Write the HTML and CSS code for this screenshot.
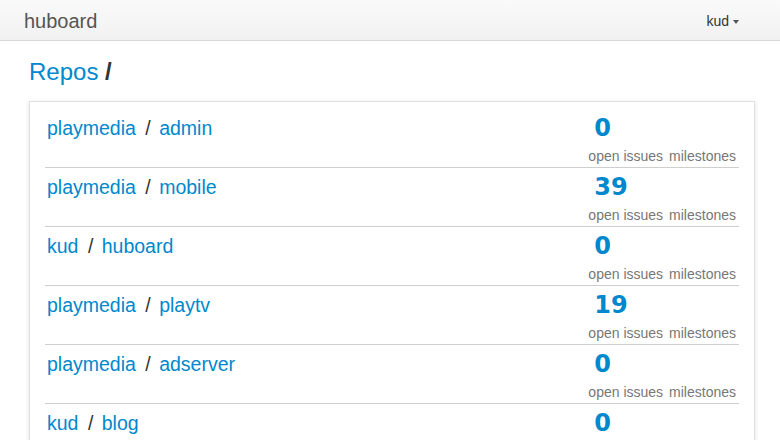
FILE: index.html
```html
<!DOCTYPE html>
<html>
<head>
<meta charset="utf-8">
<title>huboard</title>
<link rel="stylesheet" href="styles.css">
</head>
<body>
<header class="navbar">
  <a class="brand" href="#">huboard</a>
  <div class="user">kud<span class="caret"></span></div>
</header>
<main class="container">
  <h1 class="title"><a href="#">Repos</a> <span class="sep">/</span></h1>
  <div class="card">
    <div class="row">
      <div class="repo"><a href="#">playmedia</a> <span class="slash">/</span> <a href="#">admin</a></div>
      <div class="stats"><div class="num">0</div><div class="labels"><span>open issues</span><span>milestones</span></div></div>
    </div>
    <div class="row">
      <div class="repo"><a href="#">playmedia</a> <span class="slash">/</span> <a href="#">mobile</a></div>
      <div class="stats"><div class="num">39</div><div class="labels"><span>open issues</span><span>milestones</span></div></div>
    </div>
    <div class="row">
      <div class="repo"><a href="#">kud</a> <span class="slash">/</span> <a href="#">huboard</a></div>
      <div class="stats"><div class="num">0</div><div class="labels"><span>open issues</span><span>milestones</span></div></div>
    </div>
    <div class="row">
      <div class="repo"><a href="#">playmedia</a> <span class="slash">/</span> <a href="#">playtv</a></div>
      <div class="stats"><div class="num">19</div><div class="labels"><span>open issues</span><span>milestones</span></div></div>
    </div>
    <div class="row">
      <div class="repo"><a href="#">playmedia</a> <span class="slash">/</span> <a href="#">adserver</a></div>
      <div class="stats"><div class="num">0</div><div class="labels"><span>open issues</span><span>milestones</span></div></div>
    </div>
    <div class="row">
      <div class="repo"><a href="#">kud</a> <span class="slash">/</span> <a href="#">blog</a></div>
      <div class="stats"><div class="num">0</div><div class="labels"><span>open issues</span><span>milestones</span></div></div>
    </div>
  </div>
</main>
</body>
</html>
```
FILE: styles.css
```css
html, body {
  margin: 0;
  padding: 0;
  background: #fff;
  font-family: "Liberation Sans", Arial, sans-serif;
  color: #333;
  overflow: hidden;
}
a {
  color: #0088cc;
  text-decoration: none;
}
.navbar {
  height: 40px;
  border-bottom: 1px solid #d8d8d8;
  background: linear-gradient(#fafafa, #f1f1f1);
  display: flex;
  justify-content: space-between;
  align-items: flex-start;
  padding: 0 41px 0 24px;
}
.brand {
  color: #555;
  font-size: 20px;
  line-height: 20px;
  margin-top: 11px;
}
.user {
  font-size: 14px;
  line-height: 16px;
  margin-top: 13px;
  color: #333;
  display: flex;
  align-items: center;
}
.caret {
  display: inline-block;
  width: 0;
  height: 0;
  border-top: 4px solid #555;
  border-left: 3.5px solid transparent;
  border-right: 3.5px solid transparent;
  margin-left: 4px;
  margin-top: 1px;
}
.container {
  padding: 0 25px 0 29px;
}
.title {
  margin: 0;
  padding-top: 17px;
  font-size: 24px;
  line-height: 28px;
  font-weight: normal;
  height: 43px;
}
.title .sep {
  font-weight: bold;
  color: #333;
}
.card {
  border: 1px solid #e0e0e0;
  box-shadow: 0 1px 4px rgba(0,0,0,0.12);
  padding: 7px 15px 0 15px;
  height: 400px;
}
.row {
  display: flex;
  justify-content: space-between;
  height: 58px;
  border-bottom: 1px solid #cfcfcf;
}
.repo {
  padding-left: 2px;
  margin-top: 7px;
  font-size: 19.5px;
  line-height: 24px;
}
.slash {
  color: #333;
  margin: 0 3px 0 4px;
}
.stats {
  padding-right: 3px;
  display: flex;
  flex-direction: column;
}
.num {
  padding-left: 6px;
  margin-top: 4px;
  font-family: "DejaVu Sans", "Liberation Sans", sans-serif;
  font-size: 24px;
  line-height: 30px;
  font-weight: bold;
  color: #0088cc;
}
.labels {
  margin-top: 4px;
  font-size: 14px;
  line-height: 18px;
  color: #777;
  display: flex;
  gap: 6px;
}
```
